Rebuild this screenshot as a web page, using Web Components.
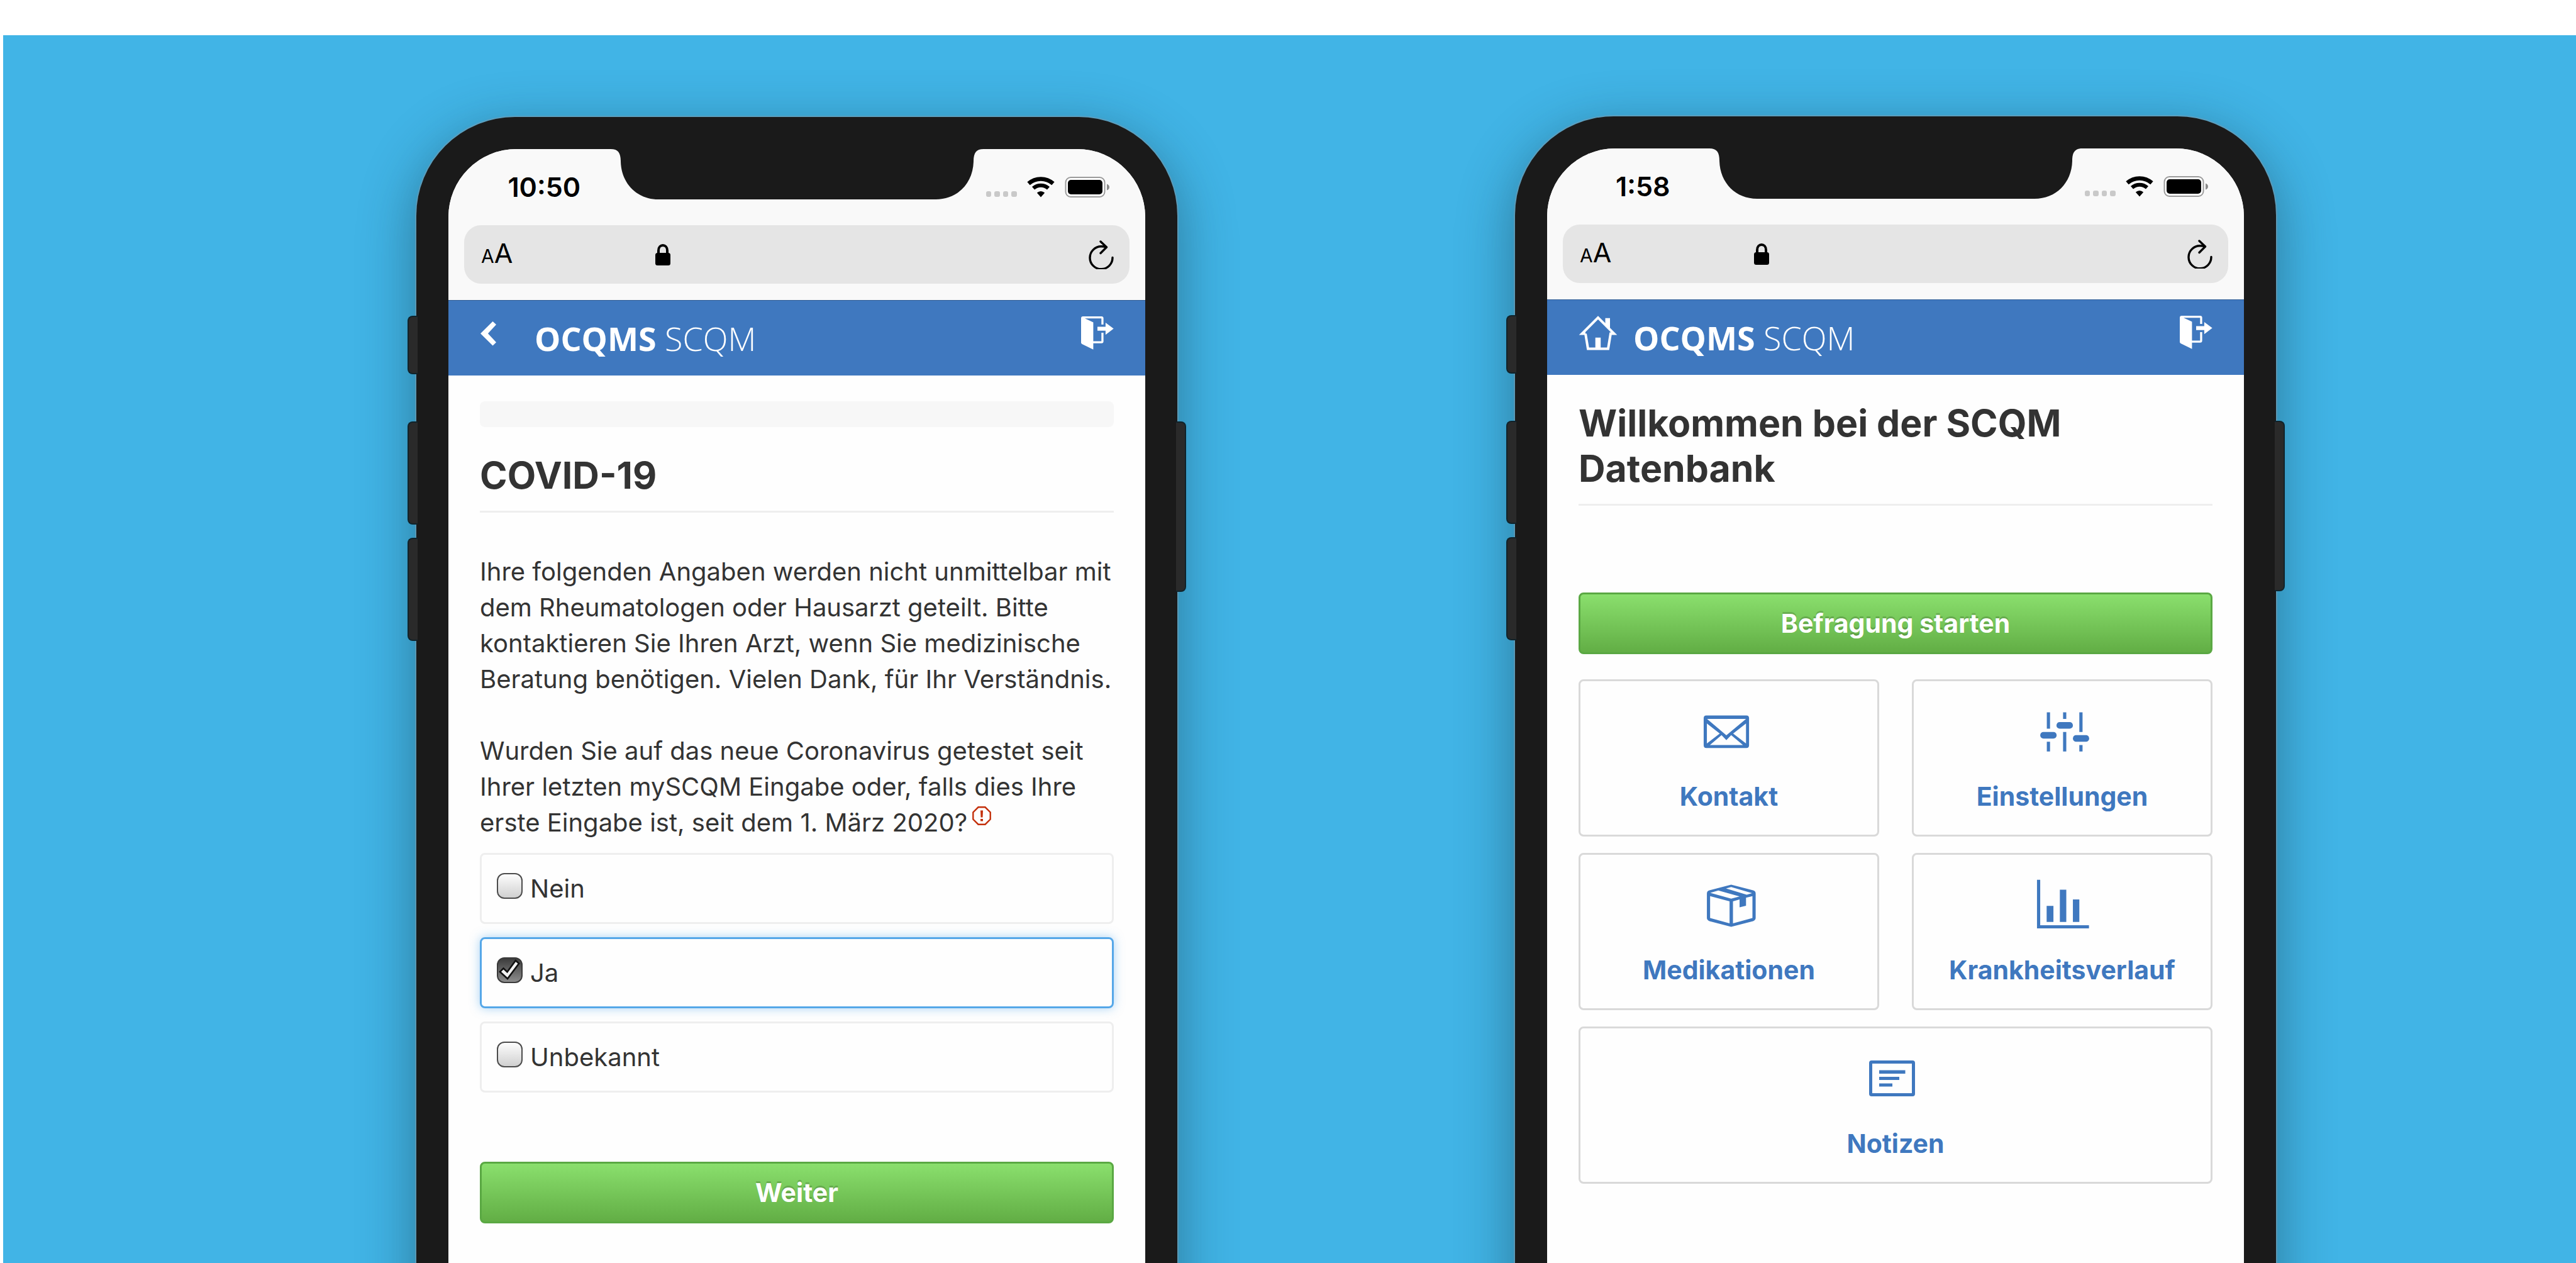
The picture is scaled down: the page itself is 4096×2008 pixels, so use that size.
<!DOCTYPE html>
<html lang="de">
<head>
<meta charset="utf-8">
<title>OCQMS SCQM</title>
<style>
  html, body { margin: 0; background: #fff; }
  body {
    box-sizing: border-box;
    min-height: 100vh;
    padding: 56px 0 0 5px;
    display: grid;
    font-family: Inter, "Liberation Sans", sans-serif;
    font-size: 40px;
    line-height: 57px;
    color: #333;
  }
</style>
</head>
<body>
<phone-stage>
  <phone-frame time="10:50" style="--rise: 130px">
    <app-bar slot="bar" nav="back"></app-bar>
    <survey-page></survey-page>
  </phone-frame>
  <phone-frame time="1:58" style="--rise: 129px">
    <app-bar slot="bar" nav="home"></app-bar>
    <home-page></home-page>
  </phone-frame>
</phone-stage>

<script>
const define = (name, html, setup) => {
  const template = document.createElement('template');
  template.innerHTML = html;
  customElements.define(name, class extends HTMLElement {
    constructor() {
      super();
      this.attachShadow({ mode: 'open' }).append(template.content.cloneNode(true));
    }
    connectedCallback() {
      if (setup) setup(this, this.shadowRoot);
    }
  });
};

/* Blue backdrop that holds the two devices */
define('phone-stage', `
  <style>
    :host {
      display: grid;
      grid-template-columns: 657fr 1210px 537fr 1210px 477fr;
      background: #41b4e6;
      overflow: hidden;
    }
    ::slotted(:first-child) { grid-column: 2; }
    ::slotted(:last-child) { grid-column: 4; }
  </style>
  <slot></slot>`);

/* Device body with status bar and browser address bar */
define('phone-frame', `
  <style>
    :host {
      display: flex;
      position: relative;
      box-sizing: border-box;
      margin: var(--rise) 0 -200px;
      padding: 51px 51px 0;
      background: #1a1a1a;
      border-radius: 157px 157px 0 0;
      box-shadow: 0 0 0 2px rgba(130, 155, 170, .45), 0 24px 84px 6px rgba(20, 50, 60, .42);
    }
    .key {
      position: absolute;
      box-sizing: border-box;
      width: 16px;
      background: #2a2a2a;
      border: 2px solid #10232b;
    }
    .left { left: -14px; border-right: 0; border-radius: 8px 0 0 8px; }
    .right { right: -14px; border-left: 0; border-radius: 0 8px 8px 0; }
    .mute { top: 316px; height: 93px; }
    .up { top: 484px; height: 164px; }
    .down { top: 669px; height: 164px; }
    .power { top: 484px; height: 271px; }
    .screen {
      flex: 1;
      min-width: 0;
      display: flex;
      flex-direction: column;
      background: #fefefe;
      border-radius: 108px 108px 0 0;
      overflow: hidden;
    }
    .chrome { background: #f9f9f9; padding-bottom: 26px; }
    .status {
      display: grid;
      grid-template-columns: minmax(0, 1fr) 593px minmax(0, 1fr);
      align-items: start;
      height: 121px;
    }
    .ear { display: flex; }
    .clock { justify-content: center; padding: 32px 0 0 47px; font-size: 43px; font-weight: 600; color: #000; }
    .state { padding: 44px 0 0 4px; }
    svg { display: block; flex: none; }
    .address {
      display: flex;
      align-items: center;
      height: 93px;
      margin: 0 25px;
      padding: 0 25px 0 27px;
      box-sizing: border-box;
      background: #e5e5e5;
      border-radius: 27px;
    }
    button { border: 0; padding: 0; background: none; font: inherit; color: #000; }
    .size { width: 100px; text-align: left; font-size: 43px; }
    .size small { font-size: 30px; }
    .url { flex: 1; padding-left: 177px; }
  </style>
  <span class="key left mute"></span>
  <span class="key left up"></span>
  <span class="key left down"></span>
  <span class="key right power"></span>
  <div class="screen">
    <div class="chrome">
      <div class="status">
        <div class="ear clock"><time></time></div>
        <svg width="593" height="80" viewBox="0 0 593 80"><path fill="#1a1a1a" d="M0 0C12 0 16 6 16 20C17 55 42 80 76 80H517C551 80 576 55 577 20C577 6 581 0 593 0Z"/></svg>
        <div class="ear state">
          <svg width="196" height="33" viewBox="0 0 196 33">
            <g fill="#c9c9c9"><rect x="0" y="23" width="8" height="9" rx="3"/><rect x="13" y="23" width="9" height="9" rx="3"/><rect x="27" y="23" width="8" height="9" rx="3"/><rect x="40" y="23" width="9" height="9" rx="3"/></g>
            <g fill="none" stroke="#000"><path stroke-width="6.5" d="M67.5 10.8A29.500 29.500 0 0 1 106.500 10.800"/><path stroke-width="6" d="M75 18.300A17.800 17.800 0 0 1 99 18.300"/></g>
            <path d="M87 32.500L80.800 25.500Q87 20.500 93.200 25.500Z"/>
            <rect x="126.500" y="1" width="62" height="31" rx="8" fill="#fff" stroke="#9b9b9b" stroke-width="2"/>
            <rect x="130" y="5" width="55" height="23" rx="5"/>
            <path fill="#8a8a8a" d="M192 11.500Q196 13 196 16.500Q196 20 192 21.500Z"/>
          </svg>
        </div>
      </div>
      <div class="address">
        <button class="size" aria-label="Textgröße"><small>A</small>A</button>
        <div class="url">
          <svg width="24" height="34" viewBox="0 0 24 34"><path fill="none" stroke="#000" stroke-width="4" d="M5 16V10.500C5 -.700 19 -.700 19 10.500V16"/><rect y="14" width="24" height="20" rx="3.500"/></svg>
        </div>
        <button aria-label="Neu laden">
          <svg width="40" height="46" viewBox="0 0 40 46" fill="none" stroke="#000" stroke-width="3.400" stroke-linecap="round" stroke-linejoin="round"><path d="M38 27.500A18 18 0 1 1 20 9.800Q25 9.800 28 11"/><path d="M19 2L28.500 11L19 20.500"/></svg>
        </button>
      </div>
    </div>
    <slot name="bar"></slot>
    <slot></slot>
  </div>`,
  (host, root) => { root.querySelector('time').textContent = host.getAttribute('time'); });

/* Blue application header */
const navIcons = {
  back: '<svg width="62" height="55" viewBox="-1 -8 62 55"><path fill="#fff" d="M19.500 0L25 4.900L11.900 19.200L25 33.200L19.500 38.400L0 19.200Z"/></svg>',
  home: '<svg width="62" height="55" viewBox="0 0 62 55"><path fill="none" stroke="#fff" stroke-width="4" d="M11 28.500H5.500L31 3L56.500 28.500H51L47 52.500H15L11 28.500"/><path fill="#fff" d="M42.500 3.700H50V22L42.500 14.500ZM26.700 34.700H35.200V53H26.700Z"/></svg>'
};
define('app-bar', `
  <style>
    :host {
      display: flex;
      box-sizing: border-box;
      height: 120px;
      padding: 25px 50px 0;
      background: #3f78bf;
      border-top: 1px solid #2f5c94;
      color: #fff;
    }
    a { color: inherit; text-decoration: none; }
    svg { display: block; }
    .nav { width: 87px; }
    .brand { flex: 1; font: 300 52px/69px "Open Sans", sans-serif; }
    b { font-weight: 700; }
  </style>
  <a class="nav" href="#"></a>
  <a class="brand" href="#"><b>OCQMS</b> SCQM</a>
  <a href="#" aria-label="Abmelden">
    <svg width="52" height="55" viewBox="0 0 52 55"><path fill="#fff" fill-rule="evenodd" d="M3 0H32.500Q35.600 0 35.600 3V13H32.300V3.200H6L19.400 9.400V52.800L1.500 44Q0 43.200 0 41.500V3Q0 0 3 0ZM19.400 39.500H32.300V26H35.600V39.700Q35.600 42.700 32.500 42.700H19.400ZM26 16.500H38.900V10L51.700 19.500L38.900 29.300V22.700H26Z"/></svg>
  </a>`,
  (host, root) => {
    const kind = host.getAttribute('nav');
    const link = root.querySelector('.nav');
    link.innerHTML = navIcons[kind];
    link.setAttribute('aria-label', kind === 'back' ? 'Zurück' : 'Startseite');
  });

define('page-title', `
  <style>
    :host { display: block; padding-bottom: 20px; border-bottom: 3px solid #eee; }
    h1 { margin: 0; font-size: 59px; line-height: 72px; font-weight: 700; color: #333; }
  </style>
  <h1><slot></slot></h1>`);

define('primary-button', `
  <style>
    :host { display: block; }
    button {
      display: block;
      width: 100%;
      height: 98px;
      padding: 0;
      border: 3px solid #5aa843;
      border-radius: 8px;
      background: linear-gradient(#8adf6d, #62ae45);
      color: #fff;
      font: 700 41px/57px Inter, "Liberation Sans", sans-serif;
      text-shadow: 0 -3px 0 rgba(0, 0, 0, .18);
    }
  </style>
  <button type="button"><slot></slot></button>`);

define('choice-box', `
  <style>
    :host { display: block; }
    label {
      display: flex;
      align-items: flex-start;
      gap: 12px;
      padding: 25px 24px;
      border: 3px solid #eee;
      border-radius: 8px;
    }
    :host([checked]) label { border-color: #55a7e8; box-shadow: 0 0 16px rgba(82, 168, 236, .5); }
    .tick { display: grid; margin-top: 4px; }
    .tick > * { grid-area: 1 / 1; }
    input {
      appearance: none;
      box-sizing: border-box;
      width: 41px;
      height: 41px;
      margin: 0;
      border: 2px solid #4c4c4c;
      border-radius: 12px;
      background: linear-gradient(#fdfdfd, #d0d0d0);
    }
    input:checked { border-color: #3a3a3a; background: linear-gradient(#3c3c3c, #8c8c8c); }
    svg { display: none; pointer-events: none; }
    input:checked + svg { display: block; }
  </style>
  <label>
    <span class="tick">
      <input type="checkbox">
      <svg width="41" height="41" viewBox="0 0 41 41"><path fill="#f2f2f2" stroke="#111" stroke-width="2.600" d="M5 23L10.500 17.500L16.500 23.300L29.800 5.200L35.200 9.700L17 34Z"/></svg>
    </span>
    <span><slot></slot></span>
  </label>`,
  (host, root) => { root.querySelector('input').checked = host.hasAttribute('checked'); });

define('survey-page', `
  <style>
    :host { display: block; padding: 41px 50px; }
    progress {
      appearance: none;
      display: block;
      width: 100%;
      height: 41px;
      margin-bottom: 41px;
      border: 0;
      border-radius: 8px;
      background: #f7f7f7;
      overflow: hidden;
    }
    progress::-webkit-progress-bar { background: #f7f7f7; }
    p { margin: 65px 0 57px; }
    fieldset { margin: 0 0 110px; padding: 0; border: 0; min-width: 0; }
    legend { padding: 0 0 20px; }
    .choices { display: grid; gap: 21px; }
    svg { margin-left: 8px; vertical-align: 10px; }
  </style>
  <progress value="0" max="100" aria-label="Fortschritt"></progress>
  <page-title>COVID-19</page-title>
  <p>Ihre folgenden Angaben werden nicht unmittelbar mit dem Rheumatologen oder Hausarzt geteilt. Bitte kontaktieren Sie Ihren Arzt, wenn Sie medizinische Beratung benötigen. Vielen Dank, für Ihr Verständnis.</p>
  <fieldset>
    <legend>Wurden Sie auf das neue Coronavirus getestet seit Ihrer letzten mySCQM Eingabe oder, falls dies Ihre erste Eingabe ist, seit dem 1. März 2020?<svg width="30" height="30" viewBox="0 0 30 30"><path fill="none" stroke="#c32f0a" stroke-width="2.400" d="M9.500 1.300H20.500L28.700 9.500V20.500L20.500 28.700H9.500L1.300 20.500V9.500Z"/><path fill="#c32f0a" d="M13 6.500H17L16.500 17.500H13.500ZM13 20H17V23.500H13Z"/></svg></legend>
    <div class="choices">
      <choice-box>Nein</choice-box>
      <choice-box checked>Ja</choice-box>
      <choice-box>Unbekannt</choice-box>
    </div>
  </fieldset>
  <primary-button>Weiter</primary-button>`);

/* Dashboard tile: icon above its label */
define('menu-tile', `
  <style>
    :host { display: block; }
    a {
      display: flex;
      flex-direction: column;
      align-items: center;
      gap: 28px;
      padding: 31px 0 32px;
      border: 3px solid #d9d9d9;
      border-radius: 8px;
      color: #3f78bf;
      font-size: 41px;
      font-weight: 700;
      text-decoration: none;
    }
    ::slotted(svg) { display: block; }
  </style>
  <a href="#"><slot name="icon"></slot><span><slot></slot></span></a>`);

define('home-page', `
  <style>
    :host { display: block; padding: 41px 50px; }
    primary-button { margin: 138px 0 40px; }
    nav { display: grid; grid-template-columns: 1fr 1fr; gap: 26px 52px; }
    .wide { grid-column: 1 / -1; }
    svg { fill: #3f78bf; }
  </style>
  <page-title>Willkommen bei der SCQM Datenbank</page-title>
  <primary-button>Befragung starten</primary-button>
  <nav>
    <menu-tile>
      <svg slot="icon" width="96" height="96" viewBox="47 -14 338 338"><path fill-rule="evenodd" d="M90 69H314Q329 69 329 84V236Q329 251 314 251H90Q75 251 75 236V84Q75 69 90 69ZM94 88L202 180L312 88ZM93 114V225L165 170ZM312 114L240 170L312 225ZM175 179L110 234H295L229 179L202 207Z"/></svg>Kontakt
    </menu-tile>
    <menu-tile>
      <svg slot="icon" width="96" height="96" viewBox="50 -14 338 338"><path d="M133 51H151V143H133ZM133 216H151V270H133ZM224 51H242V88H224ZM224 161H242V270H224ZM315 51H333V161H315ZM315 234H333V270H315Z"/><rect x="96" y="161" width="92" height="37" rx="18"/><rect x="187" y="106" width="92" height="37" rx="18"/><rect x="279" y="179" width="91" height="37" rx="18"/></svg>Einstellungen
    </menu-tile>
    <menu-tile>
      <svg slot="icon" width="96" height="96" viewBox="47 957 338 338"><path fill-rule="evenodd" d="M229 1015L352 1047Q366 1051 366 1064V1201Q366 1214 352 1219L229 1251L107 1219Q93 1214 93 1201V1064Q93 1051 107 1047ZM111 1079V1202L220 1232V1108ZM239 1108V1232L348 1202V1079L312 1088V1133L276 1142V1098ZM229 1028L200 1036L316 1071L346 1063ZM157 1048L112 1061L229 1093L276 1081Z"/></svg>Medikationen
    </menu-tile>
    <menu-tile>
      <svg slot="icon" width="96" height="96" viewBox="50 957 338 338"><path d="M78 988H96V1242H369V1260H78ZM132 1134H170V1224H132ZM206 1043H242V1224H206ZM279 1098H315V1224H279Z"/></svg>Krankheitsverlauf
    </menu-tile>
    <menu-tile class="wide">
      <svg slot="icon" width="96" height="96" viewBox="0 0 96 96"><path fill-rule="evenodd" d="M10 20H75Q79 20 79 24V73Q79 77 75 77H10Q6 77 6 73V24Q6 20 10 20ZM11 25V72H74V25ZM22 35.500H63.500V41H22ZM22 46H54V51H22ZM22 56.500H43V61.500H22Z"/></svg>Notizen
    </menu-tile>
  </nav>`);
</script>
</body>
</html>
